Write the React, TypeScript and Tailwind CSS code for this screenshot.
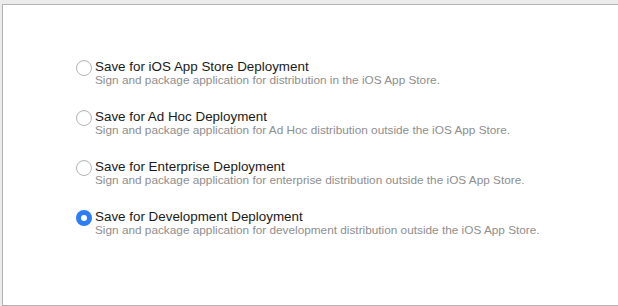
const options = [
  {
    title: "Save for iOS App Store Deployment",
    desc: "Sign and package application for distribution in the iOS App Store.",
  },
  {
    title: "Save for Ad Hoc Deployment",
    desc: "Sign and package application for Ad Hoc distribution outside the iOS App Store.",
  },
  {
    title: "Save for Enterprise Deployment",
    desc: "Sign and package application for enterprise distribution outside the iOS App Store.",
  },
  {
    title: "Save for Development Deployment",
    desc: "Sign and package application for development distribution outside the iOS App Store.",
  },
];

const Radio = ({ checked }: { checked: boolean }) =>
  checked ? (
    <span className="flex h-[16px] w-[16px] shrink-0 items-center justify-center rounded-full bg-[#2d7df6]">
      <span className="block h-[6px] w-[6px] rounded-full bg-white" />
    </span>
  ) : (
    <span className="block h-[16px] w-[16px] shrink-0 rounded-full border border-[#b5b5b5] bg-white shadow-[inset_0_1px_1px_rgba(0,0,0,0.05)]" />
  );

export default function App() {
  return (
    <div className="h-[306px] w-[618px] bg-[#ececec] pl-[2px] pt-[4px] font-['Liberation_Sans',Arial,sans-serif]">
      <div className="h-[302px] border-b border-l border-t border-[#b3b3b3] bg-white pl-[73px] pt-[54px]">
        <div className="flex flex-col gap-[22px]">
          {options.map((o, i) => (
            <div key={o.title} className="flex items-start gap-[3px]">
              <div className="pt-[1px]">
                <Radio checked={i === 3} />
              </div>
              <div className="flex flex-col">
                <span className="text-[13.4px] leading-[15px] text-[#1a1a1a]">{o.title}</span>
                <span className="text-[11.8px] leading-[13px] text-[#8e8e8e]">{o.desc}</span>
              </div>
            </div>
          ))}
        </div>
      </div>
    </div>
  );
}
